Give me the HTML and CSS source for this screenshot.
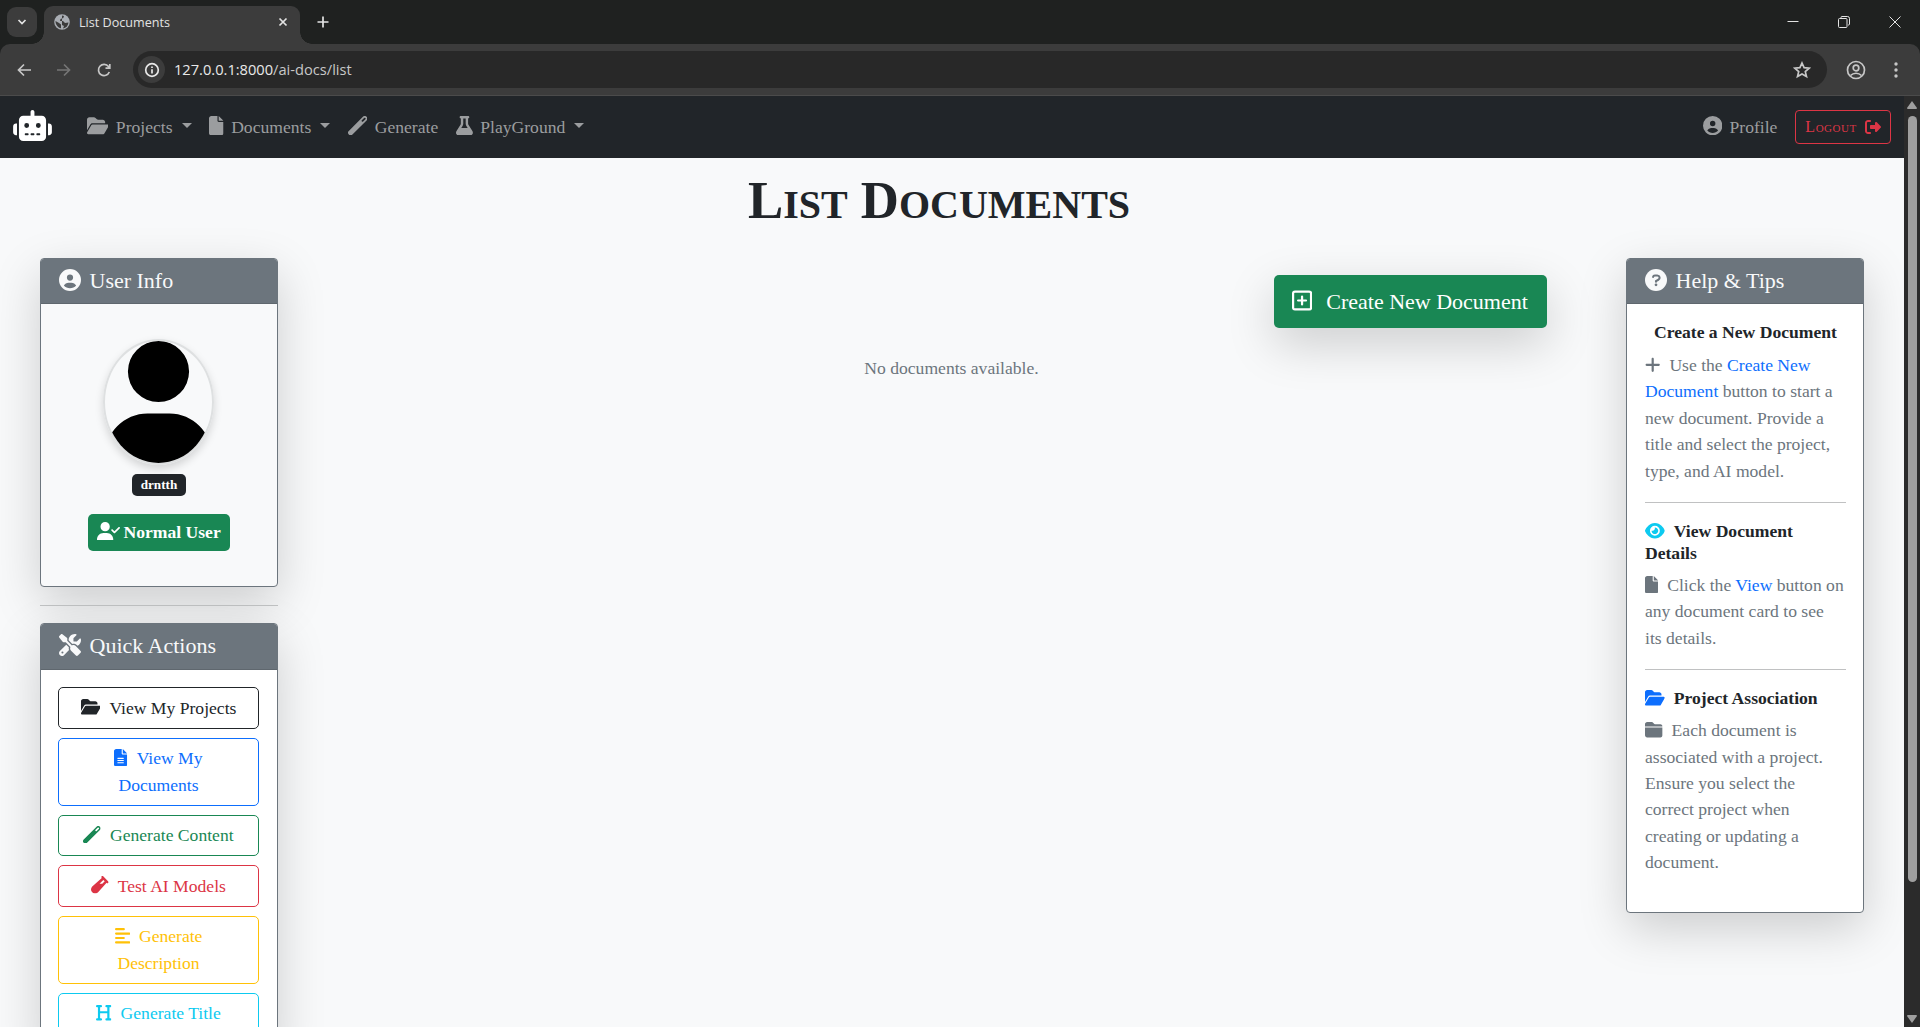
FILE: index.html
```html
<!DOCTYPE html>
<html lang="en">
<head>
<meta charset="utf-8">
<title>List Documents</title>
<link rel="stylesheet" href="styles.css">
</head>
<body>
<svg class="sprite" aria-hidden="true">
<symbol id="folder-open" viewBox="0 0 576 512"><path d="M88.7 223.8L0 375.8V96C0 60.7 28.7 32 64 32H181.5c17 0 33.3 6.7 45.3 18.7l26.5 26.5c12 12 28.3 18.7 45.3 18.7H416c35.3 0 64 28.7 64 64v32H144c-22.8 0-43.8 12.1-55.3 31.8zm27.6 16.1C122.1 230 132.6 224 144 224H544c11.5 0 22 6.1 27.7 16.1s5.7 22.2-.1 32.1l-112 192C453.9 474 443.4 480 432 480H32c-11.5 0-22-6.1-27.7-16.1s-5.7-22.2 .1-32.1l112-192z"/></symbol>
<symbol id="file" viewBox="0 0 384 512"><path d="M0 64C0 28.7 28.7 0 64 0H224V128c0 17.7 14.3 32 32 32H384V448c0 35.3-28.7 64-64 64H64c-35.3 0-64-28.7-64-64V64zm384 64H256V0L384 128z"/></symbol>
<symbol id="file-lines" viewBox="0 0 384 512"><path d="M64 0C28.7 0 0 28.7 0 64V448c0 35.3 28.7 64 64 64H320c35.3 0 64-28.7 64-64V160H256c-17.7 0-32-14.3-32-32V0H64zM256 0V128H384L256 0zM112 256H272c8.8 0 16 7.2 16 16s-7.2 16-16 16H112c-8.8 0-16-7.2-16-16s7.2-16 16-16zm0 64H272c8.8 0 16 7.2 16 16s-7.2 16-16 16H112c-8.8 0-16-7.2-16-16s7.2-16 16-16zm0 64H272c8.8 0 16 7.2 16 16s-7.2 16-16 16H112c-8.8 0-16-7.2-16-16s7.2-16 16-16z"/></symbol>
<symbol id="circle-user" viewBox="0 0 512 512"><path d="M399 384.2C376.9 345.8 335.4 320 288 320H224c-47.4 0-88.9 25.8-111 64.2c35.2 39.2 86.2 63.8 143 63.8s107.8-24.7 143-63.8zM0 256a256 256 0 1 1 512 0A256 256 0 1 1 0 256zm256 16a72 72 0 1 0 0-144 72 72 0 1 0 0 144z"/></symbol>
<symbol id="logout" viewBox="0 0 512 512"><path d="M377.9 105.9L500.7 228.7c7.2 7.2 11.3 17.1 11.3 27.3s-4.1 20.1-11.3 27.3L377.9 406.1c-6.4 6.4-15 9.9-24 9.9c-18.7 0-33.9-15.2-33.9-33.9l0-62.1-128 0c-17.7 0-32-14.3-32-32l0-64c0-17.7 14.3-32 32-32l128 0 0-62.1c0-18.7 15.2-33.9 33.9-33.9c9 0 17.6 3.6 24 9.9zM160 96L96 96c-17.7 0-32 14.3-32 32l0 256c0 17.7 14.3 32 32 32l64 0c17.7 0 32 14.3 32 32s-14.3 32-32 32l-64 0c-53 0-96-43-96-96L0 128C0 75 43 32 96 32l64 0c17.7 0 32 14.3 32 32s-14.3 32-32 32z"/></symbol>
<symbol id="robot" viewBox="0 0 640 512"><path d="M320 0c17.7 0 32 14.3 32 32V96H472c39.8 0 72 32.2 72 72V440c0 39.8-32.2 72-72 72H168c-39.8 0-72-32.2-72-72V168c0-39.8 32.2-72 72-72H288V32c0-17.7 14.3-32 32-32zM208 384c-8.8 0-16 7.2-16 16s7.2 16 16 16h32c8.8 0 16-7.2 16-16s-7.2-16-16-16H208zm96 0c-8.8 0-16 7.2-16 16s7.2 16 16 16h32c8.8 0 16-7.2 16-16s-7.2-16-16-16H304zm96 0c-8.8 0-16 7.2-16 16s7.2 16 16 16h32c8.8 0 16-7.2 16-16s-7.2-16-16-16H400zM264 256a40 40 0 1 0-80 0 40 40 0 1 0 80 0zm152 40a40 40 0 1 0 0-80 40 40 0 1 0 0 80zM48 224H64V416H48c-26.5 0-48-21.5-48-48V272c0-26.5 21.5-48 48-48zm544 0c26.5 0 48 21.5 48 48v96c0 26.5-21.5 48-48 48H576V224h16z"/></symbol>
<symbol id="plus" viewBox="0 0 448 512"><path d="M256 80c0-17.7-14.3-32-32-32s-32 14.3-32 32V224H48c-17.7 0-32 14.3-32 32s14.3 32 32 32H192V432c0 17.7 14.3 32 32 32s32-14.3 32-32V288H400c17.7 0 32-14.3 32-32s-14.3-32-32-32H256V80z"/></symbol>
<symbol id="square-plus" viewBox="0 0 448 512"><rect x="24" y="56" width="400" height="400" rx="40" fill="none" stroke="currentColor" stroke-width="50"/><path d="M224 168V344M136 256H312" fill="none" stroke="currentColor" stroke-width="50" stroke-linecap="round"/></symbol>
<symbol id="eye" viewBox="0 0 576 512"><path d="M288 32c-80.8 0-145.5 36.8-192.6 80.6C48.6 156 17.3 208 2.5 243.7c-3.3 7.9-3.3 16.7 0 24.6C17.3 304 48.6 356 95.4 399.4C142.5 443.2 207.2 480 288 480s145.5-36.8 192.6-80.6c46.8-43.5 78.1-95.4 93-131.1c3.3-7.9 3.3-16.7 0-24.6c-14.9-35.7-46.2-87.7-93-131.1C433.5 68.8 368.8 32 288 32zM144 256a144 144 0 1 1 288 0 144 144 0 1 1 -288 0zm144-64c0 35.3-28.7 64-64 64c-7.1 0-13.9-1.2-20.3-3.3c-5.5-1.8-11.9 1.6-11.7 7.4c.3 6.9 1.3 13.8 3.2 20.7c13.7 51.2 66.4 81.6 117.6 67.9s81.6-66.4 67.9-117.6c-11.1-41.5-47.8-69.4-88.6-71.1c-5.8-.2-9.2 6.1-7.4 11.7c2.1 6.4 3.3 13.2 3.3 20.3z"/></symbol>
<symbol id="user" viewBox="0 0 448 512" preserveAspectRatio="none"><path d="M224 256A128 128 0 1 0 224 0a128 128 0 1 0 0 256zm-45.7 48C79.8 304 0 383.8 0 482.3C0 498.7 13.3 512 29.7 512H418.3c16.4 0 29.7-13.3 29.7-29.7C448 383.8 368.2 304 269.7 304H178.3z"/></symbol>
<symbol id="user-check" viewBox="0 0 640 512"><path d="M96 128a128 128 0 1 1 256 0A128 128 0 1 1 96 128zM0 482.3C0 383.8 79.8 304 178.3 304h91.4C368.2 304 448 383.8 448 482.3c0 16.4-13.3 29.7-29.7 29.7H29.7C13.3 512 0 498.7 0 482.3zM625 177L497 305c-9.4 9.4-24.6 9.4-33.9 0l-64-64c-9.4-9.4-9.4-24.6 0-33.9s24.6-9.4 33.9 0l47 47L591 143c9.4-9.4 24.6-9.4 33.9 0s9.4 24.6 0 33.9z"/></symbol>
<symbol id="flask" viewBox="0 0 448 512"><path d="M288 0H160 128C110.3 0 96 14.3 96 32s14.3 32 32 32V196.8c0 11.8-3.3 23.5-9.5 33.5L10.3 406.2C3.6 417.2 0 429.7 0 442.6C0 480.9 31.1 512 69.4 512H378.6c38.3 0 69.4-31.1 69.4-69.4c0-12.8-3.6-25.4-10.3-36.4L329.5 230.4c-6.2-10.1-9.5-21.7-9.5-33.5V64c17.7 0 32-14.3 32-32s-14.3-32-32-32H288zM192 196.8V64h64V196.8c0 23.7 6.6 46.9 19 67.1L309.5 320h-171L173 263.9c12.4-20.2 19-43.4 19-67.1z"/></symbol>
<symbol id="folder" viewBox="0 0 512 512"><path d="M448 480H64c-35.3 0-64-28.7-64-64V192H512V416c0 35.3-28.7 64-64 64zm64-320H0V96C0 60.7 28.7 32 64 32H192c20.1 0 39.1 9.5 51.2 25.6l19.2 25.6c6 8.1 15.5 12.8 25.6 12.8H448c35.3 0 64 28.7 64 64z"/></symbol>
<symbol id="tools" viewBox="0 0 512 512"><path d="M78.6 5C69.1-2.4 55.6-1.5 47 7L7 47c-8.5 8.5-9.4 22-2.1 31.6l80 104c4.5 5.9 11.6 9.4 19 9.4h54.1l109 109c-14.7 29-10 65.4 14.3 89.6l112 112c12.5 12.5 32.8 12.5 45.3 0l64-64c12.5-12.5 12.5-32.8 0-45.3l-112-112c-24.2-24.2-60.6-29-89.6-14.3l-109-109V104c0-7.5-3.5-14.5-9.4-19L78.6 5zM19.9 396.1C7.2 408.8 0 426.1 0 444.1C0 481.6 30.4 512 67.9 512c18 0 35.3-7.2 48-19.9L233.7 374.3c-7.8-20.9-9-43.6-3.6-65.1l-61.7-61.7L19.9 396.1zM512 144c0-10.5-1.1-20.7-3.2-30.5c-2.4-11.2-16.1-14.1-24.2-6l-63.9 63.9c-3 3-7.1 4.7-11.3 4.7H352c-8.8 0-16-7.2-16-16V102.6c0-4.2 1.7-8.3 4.7-11.3l63.9-63.9c8.1-8.1 5.2-21.8-6-24.2C388.7 1.1 378.5 0 368 0C288.5 0 224 64.5 224 144l0 .8 85.3 85.3c36-9.1 75.8 .5 104 28.7L429 274.5c49-23 83-72.8 83-130.5zM56 432a24 24 0 1 1 48 0 24 24 0 1 1 -48 0z"/></symbol>
<symbol id="wand" viewBox="0 0 512 512"><path fill-rule="evenodd" transform="rotate(-45 256 256)" d="M-8 188H520a68 68 0 0 1 0 136H-8a68 68 0 0 1 0-136zM436 232a24 24 0 0 0 0 48H520a24 24 0 0 0 0-48z"/></symbol>
<symbol id="vial" viewBox="0 0 512 512"><path fill-rule="evenodd" d="M310 9c-12 12-12 33 0 45l4 4L36 306c-48 48-48 122 0 170s122 48 170 0L454 198l4 4c12 12 33 12 45 0s12-33 0-45L355 9c-12-12-33-12-45 0zM248 224L359 113l40 40-71 71z"/></symbol>
<symbol id="align-left" viewBox="0 0 448 512"><path d="M32 64H256M32 192H416M32 320H256M32 448H416" stroke="currentColor" stroke-width="64" stroke-linecap="round"/></symbol>
<symbol id="heading" viewBox="0 0 448 512"><path d="M32 64H144M304 64H416M32 448H144M304 448H416M88 64V448M360 64V448M88 240H360" stroke="currentColor" stroke-width="64" stroke-linecap="round"/></symbol>
<symbol id="question" viewBox="0 0 512 512"><circle cx="256" cy="256" r="256"/><path d="M188 184c4-20 18-32 40-32h56c64 0 74 74 26 98l-54 30v16" fill="none" stroke="#6c757d" stroke-width="48" stroke-linecap="round"/><circle cx="256" cy="368" r="32" fill="#6c757d"/></symbol>
</svg>

<header class="browser">
  <div class="tabs">
    <div class="tab-search"><svg width="12" height="12" viewBox="0 0 12 12"><path d="M2.5 4L6 7.5 9.5 4" class="ln2"/></svg></div>
    <div class="tab">
      <svg width="16" height="16" viewBox="0 0 16 16"><circle cx="8" cy="8" r="7.8" fill="#a9adb3"/><path d="M8 1.5L10 2 9.3 4 6.5 5 6 7H9l2 2 3.5-.5C14 12 12 14 9 14.500L10 12 8 11M1.5 7l3.5 2 2 1.5v3.8C4 13.5 1.5 11 1.5 7z" fill="#3c3c3c"/></svg>
      <span>List Documents</span>
      <svg class="tab-x" width="10" height="10" viewBox="0 0 10 10"><path d="M1.5 1.5L8.5 8.5M8.5 1.5L1.5 8.5" class="ln2"/></svg>
    </div>
    <svg class="new-tab" width="12" height="12" viewBox="0 0 12 12"><path d="M6 .5V11.5M.5 6H11.5" class="ln2"/></svg>
    <div class="win">
      <svg width="12" height="12" viewBox="0 0 12 12"><path d="M.5 5.5H11.5" class="ln1"/></svg>
      <svg width="12" height="12" viewBox="0 0 12 12"><path d="M3 2.5V1.5a1 1 0 0 1 1-1h5.5a2 2 0 0 1 2 2V8a1 1 0 0 1-1 1H10M.5 3.5a1 1 0 0 1 1-1H8a1 1 0 0 1 1 1V10.5a1 1 0 0 1-1 1H1.5a1 1 0 0 1-1-1z" class="ln1"/></svg>
      <svg width="12" height="12" viewBox="0 0 12 12"><path d="M.5.5L11.5 11.5M11.5.5L.5 11.5" class="ln1"/></svg>
    </div>
  </div>
  <div class="toolbar">
    <div class="navs">
      <svg width="16" height="16" viewBox="0 0 16 16"><path d="M15 8H3M8 2.5L2.5 8 8 13.5" class="ln2"/></svg>
      <svg class="dim" width="16" height="16" viewBox="0 0 16 16"><path d="M1 8H13M8 2.5L13.5 8 8 13.5" class="ln2"/></svg>
      <svg width="16" height="16" viewBox="0 0 16 16"><path d="M13.3 10A5.6 5.6 0 1 1 12.5 4.5L13.5 6M13.8 2V6.2H9.5" class="ln2"/></svg>
    </div>
    <div class="url">
      <div class="info"><svg width="16" height="16" viewBox="0 0 16 16"><circle cx="8" cy="8" r="6.3" class="ln2"/><path d="M8 7.2V11.5M8 4.5V6" class="ln2"/></svg></div>
      <span>127.0.0.1:8000<i>/ai-docs/list</i></span>
      <svg class="star" width="18" height="18" viewBox="0 0 18 18"><path d="M9 2l2.1 4.7 5.1.5-3.9 3.4 1.2 5L9 13l-4.5 2.6 1.2-5L1.8 7.2l5.1-.5z" class="ln2"/></svg>
    </div>
    <svg class="person" width="20" height="20" viewBox="0 0 20 20"><circle cx="10" cy="10" r="8.5" class="ln2"/><circle cx="10" cy="8" r="2.8" class="ln2"/><path d="M4.5 15.5c3-3 8-3 11 0" class="ln2"/></svg>
    <svg class="dots" width="4" height="16" viewBox="0 0 4 16"><circle cx="2" cy="2" r="1.7"/><circle cx="2" cy="8" r="1.7"/><circle cx="2" cy="14" r="1.7"/></svg>
  </div>
</header>

<div class="viewport">
  <div class="page">
    <nav class="navbar">
      <svg class="brand"><use href="#robot"/></svg>
      <a class="nav-link"><svg class="i w576"><use href="#folder-open"/></svg>Projects<b class="caret"></b></a>
      <a class="nav-link"><svg class="i w384"><use href="#file"/></svg>Documents<b class="caret"></b></a>
      <a class="nav-link"><svg class="i w512"><use href="#wand"/></svg>Generate</a>
      <a class="nav-link"><svg class="i w448"><use href="#flask"/></svg>PlayGround<b class="caret"></b></a>
      <a class="nav-link profile"><svg class="i w512"><use href="#circle-user"/></svg>Profile</a>
      <a class="logout">Logout<svg class="i w512"><use href="#logout"/></svg></a>
    </nav>
    <h1>L<span>ist</span> D<span>ocuments</span></h1>
    <div class="layout">
      <aside>
        <section class="card light">
          <h2 class="card-header"><svg class="i w512"><use href="#circle-user"/></svg>User Info</h2>
          <div class="user">
            <svg class="avatar"><use href="#user"/></svg>
            <span class="badge name">drntth</span>
            <span class="badge role"><svg class="i w640"><use href="#user-check"/></svg>Normal User</span>
          </div>
        </section>
        <hr>
        <section class="card">
          <h2 class="card-header tall"><svg class="i w512"><use href="#tools"/></svg>Quick Actions</h2>
          <div class="actions">
            <a class="btn dark"><svg class="i w576"><use href="#folder-open"/></svg>View My Projects</a>
            <a class="btn blue"><svg class="i w384"><use href="#file-lines"/></svg>View My Documents</a>
            <a class="btn green"><svg class="i w512"><use href="#wand"/></svg>Generate Content</a>
            <a class="btn red"><svg class="i w512"><use href="#vial"/></svg>Test AI Models</a>
            <a class="btn yellow"><svg class="i w448"><use href="#align-left"/></svg>Generate Description</a>
            <a class="btn cyan"><svg class="i w448"><use href="#heading"/></svg>Generate Title</a>
          </div>
        </section>
      </aside>
      <main>
        <a class="create"><svg class="i w448"><use href="#square-plus"/></svg>Create New Document</a>
        <p class="empty">No documents available.</p>
      </main>
      <aside>
        <section class="card">
          <h2 class="card-header"><svg class="i w512"><use href="#question"/></svg>Help &amp; Tips</h2>
          <div class="tips">
            <h3 class="indent">Create a New Document</h3>
            <p><svg class="i w448"><use href="#plus"/></svg>Use the <a>Create New Document</a> button to start a new document. Provide a title and select the project, type, and AI model.</p>
            <hr>
            <h3><svg class="i w576 cyan-i"><use href="#eye"/></svg>View Document Details</h3>
            <p><svg class="i w384"><use href="#file"/></svg>Click the <a>View</a> button on any document card to see<br>its details.</p>
            <hr>
            <h3><svg class="i w576 blue-i"><use href="#folder-open"/></svg>Project Association</h3>
            <p><svg class="i w512"><use href="#folder"/></svg>Each document is associated with a project. Ensure you select the correct project when creating or updating a document.</p>
          </div>
        </section>
      </aside>
    </div>
  </div>
  <div class="scrollbar"><svg width="10" height="8" viewBox="0 0 10 8"><path d="M5 0L10 7Q10 8 9 8H1Q0 8 0 7z"/></svg><div class="thumb"></div><svg width="10" height="8" viewBox="0 0 10 8"><path d="M5 8L10 1Q10 0 9 0H1Q0 0 0 1z"/></svg></div>
</div>
</body>
</html>
```
FILE: styles.css
```css
* { box-sizing: border-box; }
body {
  margin: 0; height: 1027px; overflow: hidden; display: flex; flex-direction: column;
  font: 17.6px/1.5 "Liberation Serif", "Times New Roman", serif; color: #212529; background: #f8f9fa;
}
h1, h2, h3, p { margin: 0; font-weight: 400; }
svg { flex: none; }
.sprite { display: none; }

/* browser window */
.browser { font-family: "Open Sans", "Noto Sans", sans-serif; color: #e3e3e3; background: #1f2120; height: 96px; flex: none; }
.ln1, .ln2 { fill: none; stroke: currentColor; stroke-width: 1; }
.ln2 { stroke-width: 1.7; }
.tabs { height: 44px; display: flex; align-items: center; padding-left: 7px; }
.tab-search { width: 30px; height: 30px; border-radius: 9px; background: #3c3c3c; display: flex; align-items: center; justify-content: center; }
.tab { align-self: flex-end; margin-left: 7px; width: 256px; height: 38px; padding: 0 12px 6px 10px; border-radius: 9px 9px 0 0; background: #3c3c3c; display: flex; align-items: center; gap: 9px; font-size: 12.6px; position: relative; }
.tab span { padding-top: 2px; }
.tab::before, .tab::after { content: ""; position: absolute; bottom: 0; width: 12px; height: 12px; }
.tab::before { left: -12px; background: radial-gradient(circle at 0 0, transparent 11.5px, #3c3c3c 12px); }
.tab::after { right: -12px; background: radial-gradient(circle at 100% 0, transparent 11.5px, #3c3c3c 12px); }
.tab-x { margin-left: auto; }
.new-tab { margin-left: 17px; }
.win { margin-left: auto; display: flex; gap: 39px; margin-right: 19px; }
.toolbar { height: 52px; background: #3c3c3c; border-bottom: 1px solid #4b4b4b; border-radius: 10px 10px 0 0; display: flex; align-items: center; padding-left: 16px; color: #c7c7c7; }
.navs { display: flex; gap: 24px; width: 117px; flex: none; }
.dim { color: #757575; }
.url { flex: none; width: 1694px; height: 37px; border-radius: 19px; background: #282828; display: flex; align-items: center; padding: 0 16px 0 5px; font-size: 14.65px; color: #e8e8e8; }
.info { width: 27px; height: 27px; border-radius: 14px; background: #3c3c3c; display: flex; align-items: center; justify-content: center; margin-right: 9px; }
.url i { font-style: normal; color: #c7c7c7; }
.star { margin-left: auto; color: #c7c7c7; }
.person { margin-left: 19px; }
.dots { margin-left: 28px; fill: #c7c7c7; }

/* page */
.viewport { flex: 1; min-height: 0; display: flex; }
.page { width: 1904px; overflow: hidden; background: #f8f9fa; }
.i { height: 1em; vertical-align: -.125em; fill: currentColor; margin-right: 9px; }
.w384 { width: .75em; } .w448 { width: .875em; } .w512 { width: 1em; } .w576 { width: 1.125em; } .w640 { width: 1.25em; }
.navbar { height: 62px; background: #212529; display: flex; align-items: center; padding: 0 13px; color: #9b9d9f; }
.brand { width: 39px; height: 31px; fill: #fff; margin: -3px 26px 0 0; }
.nav-link { padding: 0 8.6px; }
.nav-link .i { font-size: 1.1em; margin-right: 7.5px; }
.nav-link + .nav-link:not(.profile) { padding-left: 9px; }
.caret { display: inline-block; margin-left: 9px; vertical-align: 4.5px; border: 5px solid transparent; border-top-color: currentColor; border-bottom: 0; }
.profile { margin-left: auto; }
.logout { margin-left: 9px; height: 34px; width: 96px; border: 1px solid #dc3545; border-radius: 4px; color: #dc3545; font-size: 16px; letter-spacing: .5px; font-variant: small-caps; display: flex; align-items: center; justify-content: center; }
.logout .i { margin: 0 0 0 8px; }
h1 { font-size: 52.8px; line-height: 63px; font-weight: 700; font-variant: small-caps; text-align: center; padding: 11px 26px 0 0; height: 100px; }
h1 span { font-size: 57.5px; line-height: 0; }
.layout { display: grid; grid-template-columns: 238px 1fr 238px; padding: 0 40px; align-items: start; }
.card { border: 1px solid #6c757d; border-radius: 4px; background: #fff; box-shadow: 0 16px 48px rgba(0,0,0,.175); }
.light { background: #f8f9fa; height: 329px; }
.card-header { height: 45px; background: #6c757d; color: #f8f9fa; border-bottom: 1px solid #5f676e; border-radius: 3px 3px 0 0; font-size: 22px; line-height: 44px; padding-left: 17.5px; }
.tall { height: 46px; }
.user { display: flex; flex-direction: column; align-items: center; padding-top: 35px; }
.avatar { width: 111px; height: 126px; margin-right: 2px; border: 2px solid #dee0e1; border-radius: 50%; box-shadow: 0 4px 8px rgba(0,0,0,.15); }
.badge { border-radius: 5px; color: #fff; font-weight: 700; }
.name { margin-top: 9px; height: 22px; width: 54px; text-align: center; background: #212529; font-size: 13.2px; line-height: 22px; }
.role { margin-top: 18px; width: 142px; height: 37px; background: #198754; line-height: 36px; text-align: center; white-space: nowrap; }
.role .i { font-size: 18.6px; margin-right: 3px; }
hr { margin: 18px 0 17px; border: 0; border-top: 1px solid #bfc1c2; }
.actions { padding: 17px 18px 17px 17px; display: flex; flex-direction: column; gap: 8.8px; }
.btn { border: 1px solid currentColor; border-radius: 5px; padding: 6.7px 17px; text-align: center; line-height: 26.4px; }
.dark { color: #212529; } .blue, .tips a, .blue-i { color: #0d6efd; } .green { color: #198754; } .red { color: #dc3545; } .yellow { color: #ffc107; } .cyan, .tips .cyan-i { color: #0dcaf0; }
main { display: flex; flex-direction: column; padding-top: 17px; }
.create { align-self: flex-end; margin-right: 79px; padding-right: 1px; width: 273px; height: 53px; background: #198754; color: #fff; border-radius: 5px; font-size: 22px; line-height: 53px; text-align: center; box-shadow: 0 16px 48px rgba(0,0,0,.175); }
.create .i { font-size: 23px; margin-right: 14px; }
.empty { margin-top: 27px; text-align: center; color: #6c757d; padding-right: 1px; }
.tips { padding: 17px 17px 37px 18px; color: #6c757d; }
.tips h3 { font-size: 17.6px; font-weight: 700; line-height: 22px; margin-bottom: 8px; color: #212529; }
.tips .indent { padding-left: 9px; white-space: nowrap; margin-bottom: 9px; }
.tips hr { margin: 18px 0 17px; border-color: #c0c1c2; }

/* scrollbar */
.scrollbar { width: 16px; background: #2b2b2b; fill: #9f9f9f; display: flex; flex-direction: column; align-items: center; justify-content: space-between; padding: 5px 0 4px; }
.thumb { width: 9px; height: 766px; border-radius: 5px; background: #9f9f9f; margin: 7px 0 auto; }
```
